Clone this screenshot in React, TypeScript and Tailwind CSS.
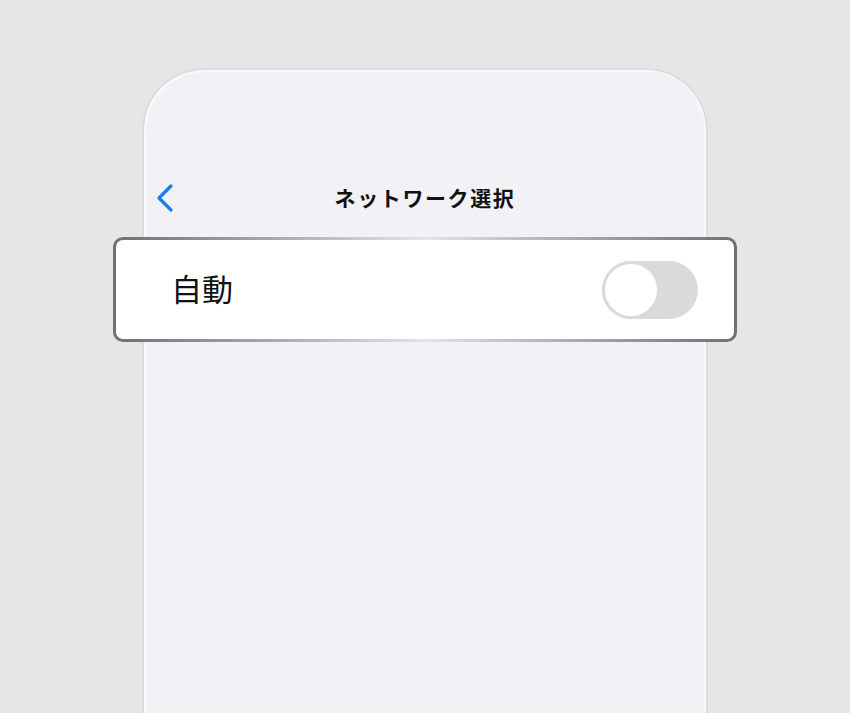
import React from 'react';

const jp = { fontFamily: '"Noto Sans CJK JP", "Noto Sans", sans-serif' };

// Back chevron used in the navigation bar
function BackChevron() {
  return (
    <svg width="20" height="30" viewBox="0 0 20 30" fill="none">
      <path
        d="M16 3 L4 15 L16 27"
        stroke="#1a7cf2"
        strokeWidth="3.2"
        strokeLinecap="round"
        strokeLinejoin="round"
      />
    </svg>
  );
}

// iOS-style switch in its "off" state
function Toggle() {
  return (
    <div className="flex h-[58px] w-[96px] items-center rounded-full bg-[#dadada]">
      <div className="h-[58px] w-[58px] rounded-full border-[3px] border-[#dadada] bg-white" />
    </div>
  );
}

export default function App() {
  return (
    <div className="flex h-[713px] w-full justify-center overflow-hidden bg-[#e6e6e6] pt-[68px]" style={jp}>
      <div className="h-[700px] w-[566px] shrink-0 rounded-t-[62px] border-x-2 border-t-2 border-[#dcdcde] bg-[#f1f1f6] shadow-[inset_2px_2px_0_#f9f9fb,inset_-2px_0_0_#f9f9fb]">
        {/* navigation bar */}
        <div className="relative mt-[106px] flex h-[44px] items-center pl-[11px]">
          <BackChevron />
          <div className="absolute inset-0 flex items-center justify-center">
            <span className="text-[21px] font-bold tracking-[1.6px] text-[#111]">ネットワーク選択</span>
          </div>
        </div>

        {/* highlighted settings row */}
        <div className="-mx-[31px] mt-[17px] rounded-[10px] bg-gradient-to-r from-[#707070] via-[#e4e4e4] to-[#707070] p-[3px]">
          <div className="flex h-[99px] items-center justify-between rounded-[7px] bg-white pl-[55px] pr-[36px]">
            <span className="-mt-[4px] text-[31px] leading-none text-[#111]">自動</span>
            <Toggle />
          </div>
        </div>
      </div>
    </div>
  );
}
